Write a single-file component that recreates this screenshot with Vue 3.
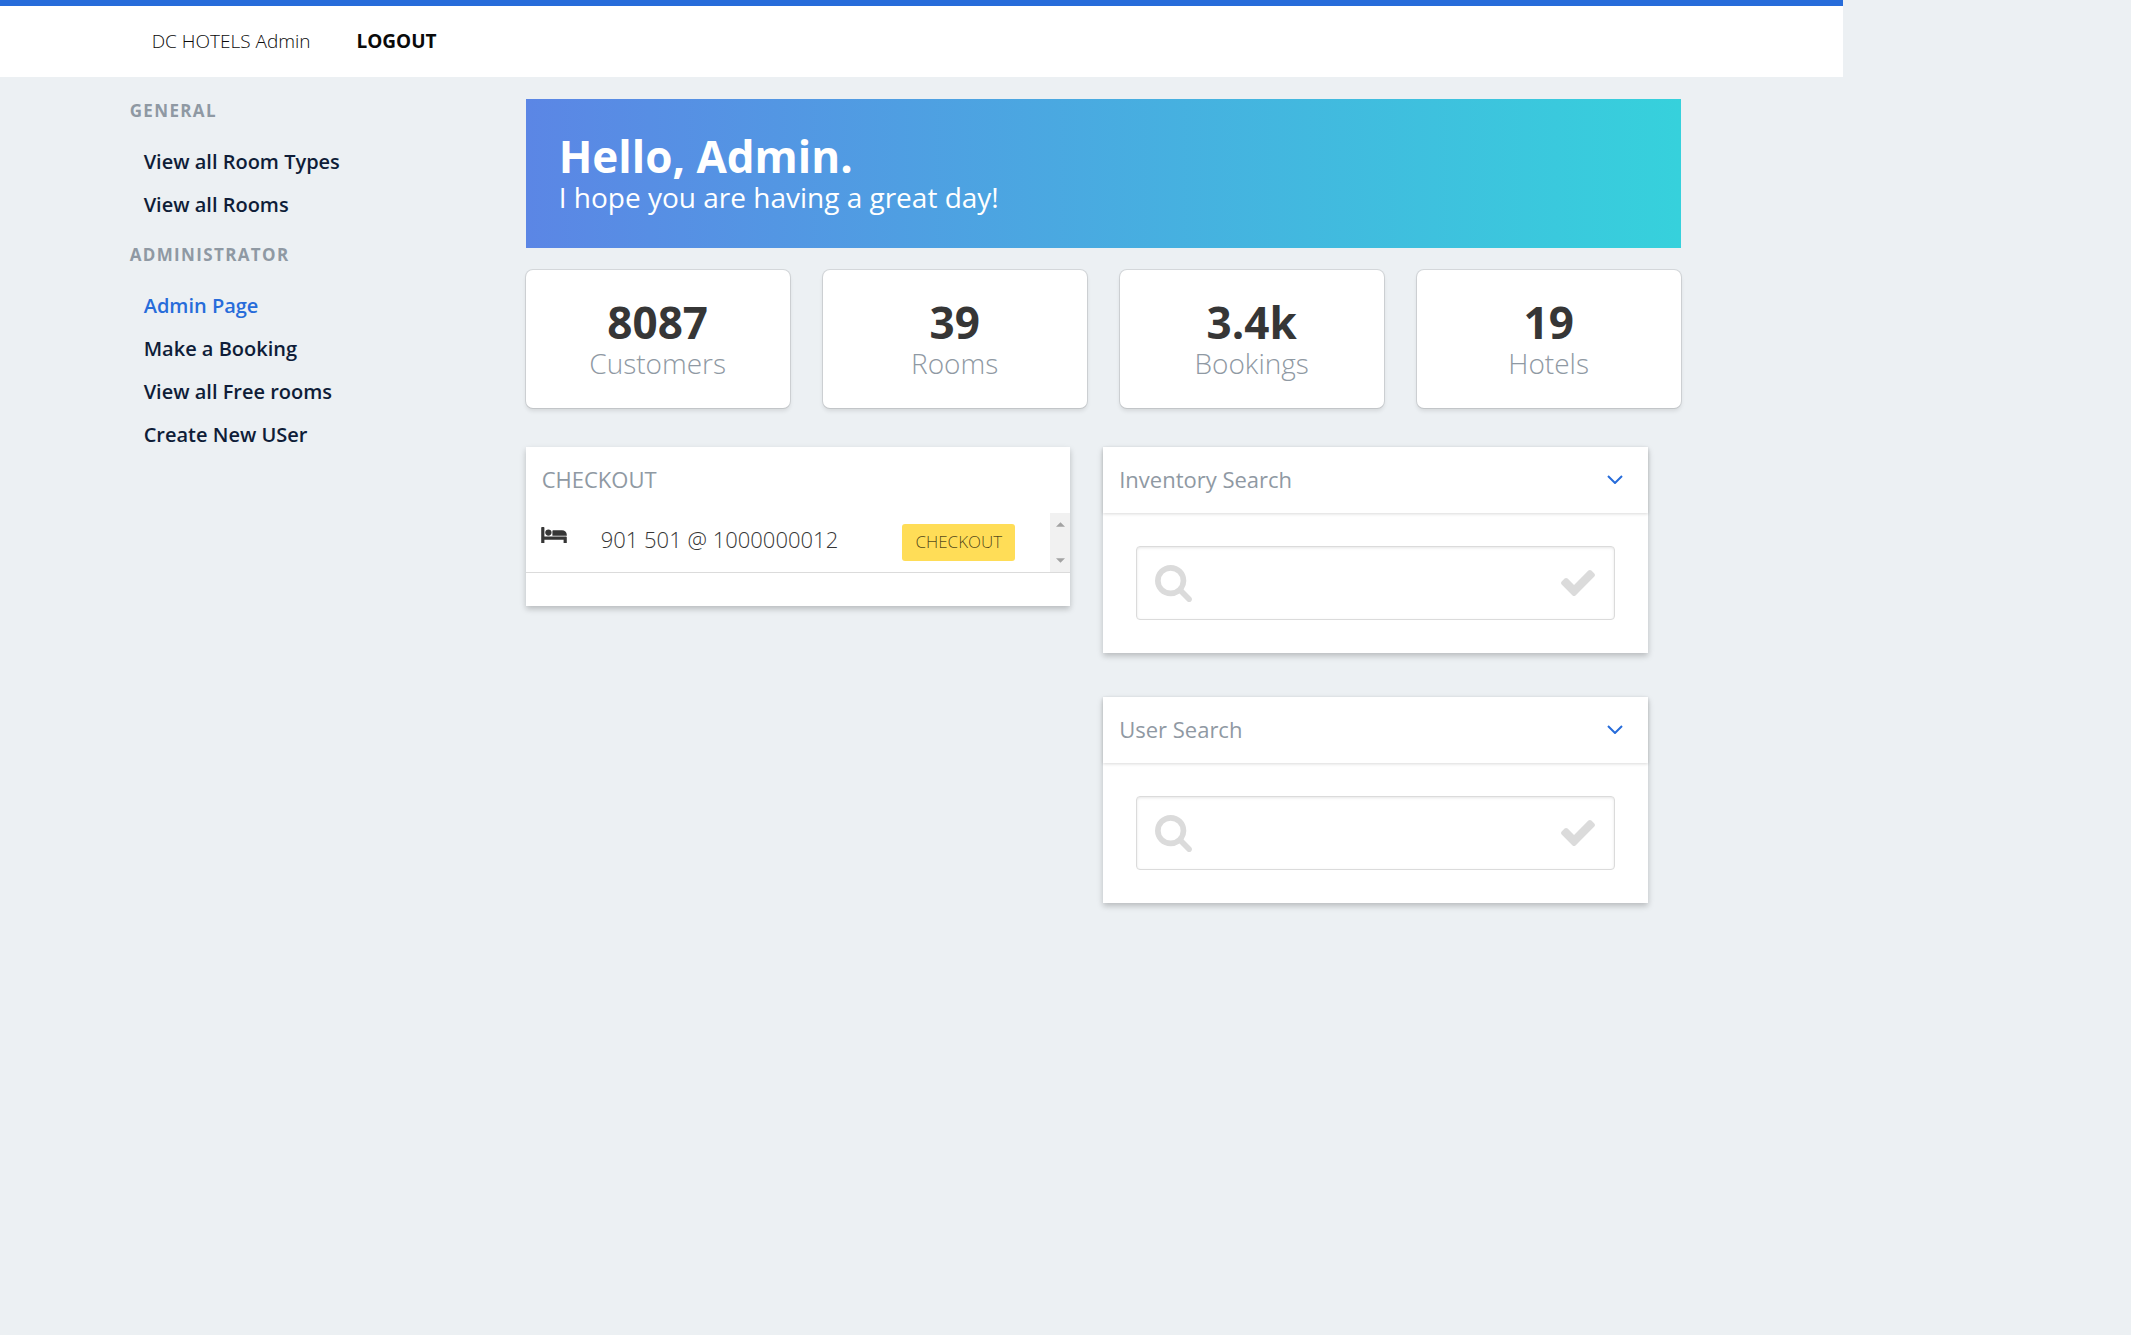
<script setup>
import { ref } from 'vue'

const menu = [
  {
    label: 'General',
    items: [{ text: 'View all Room Types' }, { text: 'View all Rooms' }],
  },
  {
    label: 'Administrator',
    items: [
      { text: 'Admin Page', active: true },
      { text: 'Make a Booking' },
      { text: 'View all Free rooms' },
      { text: 'Create New USer' },
    ],
  },
]

const stats = [
  { value: '8087', label: 'Customers' },
  { value: '39', label: 'Rooms' },
  { value: '3.4k', label: 'Bookings' },
  { value: '19', label: 'Hotels' },
]

const checkouts = ['901 501 @ 1000000012']

const searches = ref([
  { id: 'inventory', title: 'Inventory Search', query: '' },
  { id: 'user', title: 'User Search', query: '' },
])
</script>

<template>
  <div class="page">
    <header class="navbar">
      <nav class="container nav-items">
        <a class="brand" href="#">DC HOTELS Admin</a>
        <a class="logout" href="#">LOGOUT</a>
      </nav>
    </header>

    <div class="container layout">
      <aside class="sidebar">
        <section v-for="group in menu" :key="group.label" class="menu-group">
          <p class="menu-label">{{ group.label }}</p>
          <ul class="menu-list">
            <li v-for="item in group.items" :key="item.text">
              <a href="#" :class="{ active: item.active }">{{ item.text }}</a>
            </li>
          </ul>
        </section>
      </aside>

      <main class="content">
        <section class="hero">
          <h1 class="title">Hello, Admin.</h1>
          <p class="subtitle">I hope you are having a great day!</p>
        </section>

        <section class="tiles">
          <article v-for="stat in stats" :key="stat.label" class="tile">
            <p class="title">{{ stat.value }}</p>
            <p class="subtitle">{{ stat.label }}</p>
          </article>
        </section>

        <div class="columns">
          <section class="card">
            <header class="card-header plain"><h2>CHECKOUT</h2></header>
            <div class="scroller">
              <table>
                <tbody>
                  <tr v-for="entry in checkouts" :key="entry">
                    <td class="cell-icon">
                      <svg class="bed" viewBox="0 256 2048 1280" aria-hidden="true">
                        <path d="M256 1024h1728q26 0 45 19t19 45v448h-256v-256h-1536v256h-256v-1216q0-26 19-45t45-19h128q26 0 45 19t19 45v704zm576-320q0-106-75-181t-181-75-181 75-75 181 75 181 181 75 181-75 75-181zm1216 256v-64q0-159-112.5-271.5t-271.5-112.5h-704q-26 0-45 19t-19 45v384h1152z" />
                      </svg>
                    </td>
                    <td class="cell-text">{{ entry }}</td>
                    <td class="cell-action"><button type="button" class="checkout">CHECKOUT</button></td>
                  </tr>
                </tbody>
              </table>
              <div class="scrollbar" aria-hidden="true">
                <svg viewBox="0 0 10 5"><path d="M0 5L5 0L10 5z" /></svg>
                <svg viewBox="0 0 10 5"><path d="M0 0L5 5L10 0z" /></svg>
              </div>
            </div>
            <footer class="card-footer"></footer>
          </section>

          <div class="stack">
            <section v-for="search in searches" :key="search.id" class="card">
              <header class="card-header">
                <h2><label :for="search.id">{{ search.title }}</label></h2>
                <button type="button" class="toggle" :aria-label="'Toggle ' + search.title">
                  <svg viewBox="0 0 16 9" aria-hidden="true"><path d="M1 1l7 7l7-7" /></svg>
                </button>
              </header>
              <div class="card-body">
                <div class="field">
                  <input :id="search.id" v-model="search.query" type="text" />
                  <svg class="icon-search" viewBox="64 128 1664 1664" aria-hidden="true">
                    <path d="M1216 832q0-185-131.5-316.5t-316.5-131.5-316.5 131.5-131.5 316.5 131.5 316.5 316.5 131.5 316.5-131.5 131.5-316.5zm512 832q0 52-38 90t-90 38q-54 0-90-38l-343-342q-179 124-399 124-143 0-273.5-55.5t-225-150-150-225-55.5-273.5 55.5-273.5 150-225 225-150 273.5-55.5 273.5 55.5 225 150 150 225 55.5 273.5q0 220-124 399l343 343q37 37 37 90z" />
                  </svg>
                  <svg class="icon-check" viewBox="121 334 1550 1188" aria-hidden="true">
                    <path d="M1671 566q0 40-28 68l-724 724-136 136q-28 28-68 28t-68-28l-136-136-362-362q-28-28-28-68t28-68l136-136q28-28 68-28t68 28l294 295 656-657q28-28 68-28t68 28l136 136q28 28 28 68z" />
                  </svg>
                </div>
              </div>
            </section>
          </div>
        </div>
      </main>
    </div>
  </div>
</template>

<style>
html {
  background: #ecf0f3;
}
</style>

<style scoped>
.page {
  width: 86.5%;
  font-family: "Open Sans", sans-serif;
  font-size: 22px;
  color: #363636;
}
.page * {
  box-sizing: border-box;
}
a {
  text-decoration: none;
}
h1, h2, p, ul {
  margin: 0;
  padding: 0;
  font-weight: inherit;
  font-size: inherit;
}
ul {
  list-style: none;
}
.container {
  max-width: 1584px;
  margin: 0 auto;
}

.navbar {
  border-top: 6px solid #276cda;
  background: #fff;
}
.nav-items {
  display: flex;
  align-items: center;
  gap: 46px;
  height: 71px;
  padding: 0 22px 2px;
  font-size: 19px;
  color: #0a0a0a;
}
.nav-items a {
  color: inherit;
}
.brand {
  font-weight: 300;
}
.logout {
  font-weight: 700;
}

.layout {
  display: flex;
  padding-top: 22px;
  padding-bottom: 44px;
}
.sidebar {
  flex: 0 0 25%;
}
.menu-group + .menu-group {
  margin-top: 17px;
}
.menu-label {
  margin-bottom: 17px;
  font-size: 17px;
  line-height: 24px;
  font-weight: 700;
  letter-spacing: 0.08em;
  text-transform: uppercase;
  color: #8f99a3;
}
.menu-list a {
  display: block;
  padding: 7px 14px;
  font-size: 20px;
  line-height: 29px;
  font-weight: 600;
  color: #0f1d38;
}
.menu-list a.active {
  color: #276cda;
}

.content {
  flex: 1;
  min-width: 0;
  padding-right: 33px;
}
.title {
  font-size: 44px;
  line-height: 48px;
  font-weight: 700;
}
.subtitle {
  font-size: 28px;
  line-height: 35px;
}
.hero {
  padding: 33px;
  color: #fff;
  background: linear-gradient(to right, #5b86e5, #36d1dc);
}
.tiles {
  display: grid;
  grid-template-columns: repeat(4, 1fr);
  gap: 33px;
  margin-top: 22px;
}
.tile {
  padding: 28px 28px 27px;
  text-align: center;
  background: #fff;
  border-radius: 7px;
  box-shadow: 0 3px 4px rgba(10, 10, 10, 0.1), 0 0 0 1px rgba(10, 10, 10, 0.1);
}
.tile .subtitle {
  font-weight: 300;
  color: #8f99a3;
}

.columns {
  display: grid;
  grid-template-columns: 1fr 1fr;
  align-items: start;
  gap: 33px;
  margin-top: 39px;
  padding-right: 33px;
}
.stack {
  display: grid;
  gap: 44px;
}
.card {
  background: #fff;
  box-shadow: 0 3px 6px rgba(0, 0, 0, 0.22);
}
.card-header {
  display: flex;
  align-items: center;
  justify-content: space-between;
  height: 66px;
  padding: 0 16px 2px;
  color: #8f99a3;
  box-shadow: 0 1px 3px rgba(10, 10, 10, 0.15);
}
.card-header.plain {
  box-shadow: none;
}
.toggle {
  padding: 9px;
  border: 0;
  background: none;
  line-height: 0;
}
.toggle svg {
  width: 16px;
  height: 9px;
  fill: none;
  stroke: #276cda;
  stroke-width: 2;
}

.scroller {
  display: flex;
  border-bottom: 1px solid #dbdbdb;
}
table {
  flex: 1;
  border-collapse: collapse;
  font-weight: 300;
}
td {
  padding: 0;
  height: 59px;
}
.cell-icon {
  width: 75px;
  padding: 14px 15px 0;
  vertical-align: top;
  line-height: 0;
}
.bed {
  width: 26px;
  height: 16px;
  fill: #363636;
}
.cell-text {
  padding-bottom: 7px;
}
.cell-action {
  padding: 11px 35px 11px 0;
  text-align: right;
  line-height: 0;
}
.checkout {
  height: 37px;
  padding: 0 13px 2px;
  border: 0;
  border-radius: 3px;
  background: #ffdd57;
  color: rgba(0, 0, 0, 0.7);
  font: 300 17px/35px "Open Sans", sans-serif;
}
.scrollbar {
  display: flex;
  flex-direction: column;
  justify-content: space-between;
  align-items: center;
  width: 20px;
  padding: 9px 0;
  background: #f1f1f1;
}
.scrollbar svg {
  width: 9px;
  height: 5px;
  fill: #a3a3a3;
}
.card-footer {
  height: 33px;
}

.card-body {
  padding: 33px;
}
.field {
  position: relative;
}
.field input {
  display: block;
  width: 100%;
  height: 74px;
  padding: 0 74px;
  border: 1px solid #dbdbdb;
  border-radius: 4px;
  outline: 0;
  background: #fff;
  box-shadow: inset 0 1px 3px rgba(10, 10, 10, 0.1);
  color: #363636;
  font: 400 33px "Open Sans", sans-serif;
}
.field svg {
  position: absolute;
  fill: #dbdbdb;
  pointer-events: none;
}
.icon-search {
  top: 19px;
  left: 19px;
  width: 37px;
  height: 37px;
}
.icon-check {
  top: 24px;
  right: 20px;
  width: 34px;
  height: 26px;
}
</style>
